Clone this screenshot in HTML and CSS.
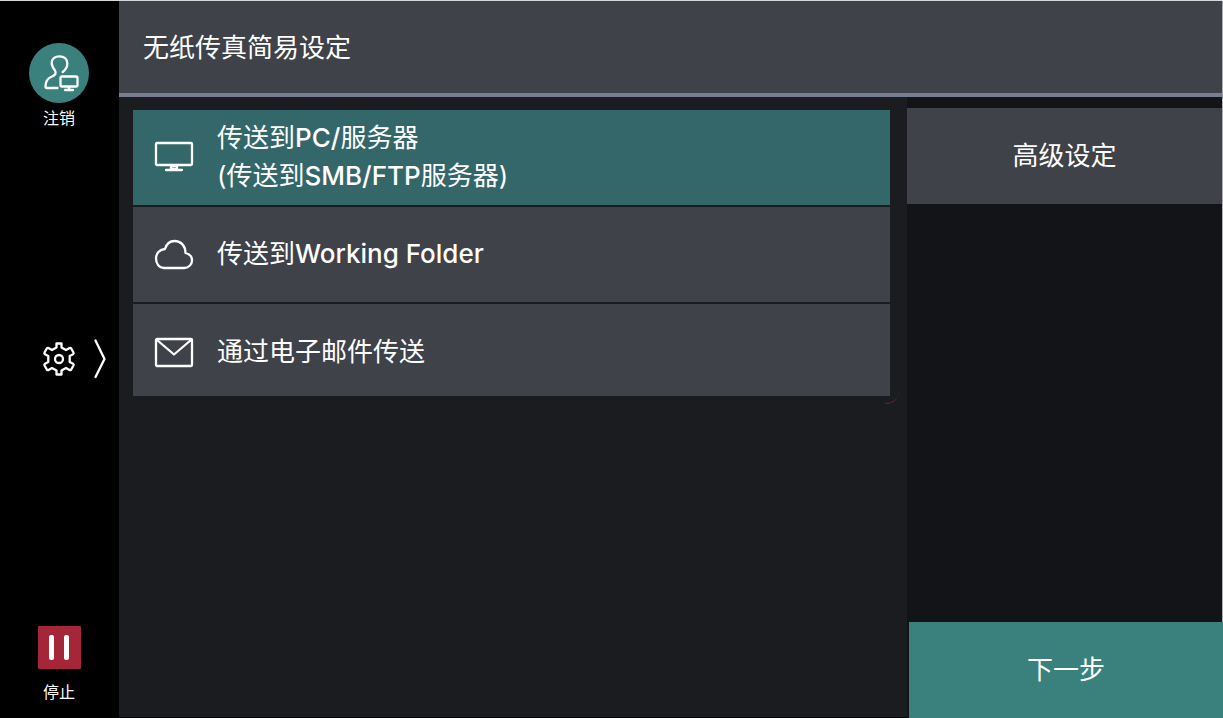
FILE: index.html
```html
<!DOCTYPE html>
<html lang="zh-CN">
  <head>
    <meta charset="UTF-8" />
    <meta name="viewport" content="width=device-width, initial-scale=1.0" />
    <title>无纸传真简易设定</title>
    <link rel="stylesheet" href="styles.css">
  </head>
  <body>
    <nav class="sidebar">
      <button class="side-btn" type="button">
        <svg class="avatar" viewBox="0 0 60 60" aria-hidden="true">
          <circle cx="30" cy="30" r="30" />
          <path d="M28.500 45H18C17 45 16.500 44.500 16.500 43.500C16.500 38 19 35 23 33.500C26.500 32 27.500 30 26 27.500C24 25 22.700 22.500 22.700 20C22.700 16 26 13.300 30.500 13.300C35 13.300 38.300 16 38.300 20.500C38.300 23.500 37 26.500 33.700 29" />
          <rect x="31.500" y="33.500" width="17" height="10" rx="1.500" />
          <path d="M40 44V46.500M36 47H44" />
        </svg>
        <span>注销</span>
      </button>
      <button class="settings-btn" type="button" aria-label="设定">
        <svg class="gear" viewBox="0 0 34 34" aria-hidden="true">
          <path d="M14.500 1.500H19.500V5.500L24 8L27.500 6Q28.500 5.500 29.200 6.500L31.500 10.500Q32 11.500 31 12.200L27.700 14V20L31 21.800Q32 22.500 31.500 23.500L29.200 27.500Q28.500 28.500 27.500 28L24 26L19.500 28.500V32.500H14.500V28.500L10 26L6.500 28Q5.500 28.500 4.800 27.500L2.500 23.500Q2 22.500 3 21.800L6.300 20V14L3 12.200Q2 11.500 2.500 10.500L4.800 6.500Q5.500 5.500 6.500 6L10 8L14.500 5.500Z" />
          <circle cx="17" cy="17" r="4" />
        </svg>
        <svg class="arrow" viewBox="0 0 12 40" aria-hidden="true">
          <path d="M1.500 1.500L10.500 20L1.500 38" />
        </svg>
      </button>
      <button class="side-btn" type="button">
        <svg class="stop" viewBox="0 0 44 44" aria-hidden="true">
          <rect class="stop-bg" x="1" width="43" height="43" rx="1" />
          <rect x="12" y="9" width="5" height="25" rx="2" />
          <rect x="27" y="9" width="5" height="25" rx="2" />
        </svg>
        <span>停止</span>
      </button>
    </nav>

    <div class="screen">
      <header class="header">
        <h1>无纸传真简易设定</h1>
      </header>
      <div class="content">
        <main class="main">
          <div class="list">
            <button class="item active" type="button">
              <svg class="icon" viewBox="0 0 40 32" aria-hidden="true">
                <rect x="2" y="2" width="36" height="22" rx="1" />
                <path d="M17 25H23V28H17ZM12 29H28" />
              </svg>
              <span>传送到<span class="latin">PC/</span>服务器<br>(传送到<span class="latin">SMB/FTP</span>服务器)</span>
            </button>
            <button class="item" type="button">
              <svg class="icon" viewBox="0 0 40 32" aria-hidden="true">
                <path d="M10 30C5 30 2 25.500 2 20.500C2 15.500 5.500 11.500 11 11C12.500 6 16 3 20.500 3C27 3 31.500 8 31.500 15C35.500 16 38 19 38 22.500C38 26.500 34.500 30 30 30Z" />
              </svg>
              <span>传送到<span class="latin">Working Folder</span></span>
            </button>
            <button class="item" type="button">
              <svg class="icon" viewBox="0 0 40 32" aria-hidden="true">
                <rect x="2" y="3" width="36" height="27" rx="1" />
                <path d="M3 4L20 18.500L37 4" />
              </svg>
              <span>通过电子邮件传送</span>
            </button>
          </div>
        </main>
        <aside class="panel">
          <button class="advanced" type="button">高级设定</button>
          <button class="next" type="button">下一步</button>
        </aside>
      </div>
    </div>
  </body>
</html>
```

FILE: styles.css
```css
* {
  box-sizing: border-box;
  margin: 0;
  padding: 0;
}
body {
  font-family: "Inter", "Noto Sans CJK SC", sans-serif;
  font-size: 26px;
  background: #000;
  color: #fff;
  display: flex;
  min-height: 100vh;
  border-top: 1px solid #d5d8d8;
}
button {
  font: inherit;
  color: inherit;
  background: none;
  border: none;
  cursor: pointer;
}
svg {
  fill: none;
  stroke: #fff;
  stroke-width: 2.3;
  stroke-linejoin: round;
  stroke-linecap: round;
}

/* left bar */
.sidebar {
  width: 119px;
  padding: 42px 1px 14px 0;
  display: flex;
  flex-direction: column;
  justify-content: space-between;
}
.side-btn {
  display: flex;
  flex-direction: column;
  align-items: center;
  gap: 3px;
  font-size: 16px;
  line-height: 24px;
}
.avatar {
  width: 60px;
  height: 60px;
}
.avatar circle {
  fill: #3a817e;
  stroke: none;
}
.settings-btn {
  display: flex;
  align-items: center;
  justify-content: flex-end;
  gap: 18px;
  margin-bottom: 38px;
  padding-right: 12px;
}
.gear {
  width: 34px;
  height: 34px;
}
.arrow {
  width: 12px;
  height: 40px;
}
.stop {
  width: 44px;
  height: 44px;
  margin-bottom: 7px;
  fill: #fff;
  stroke: none;
}
.stop-bg {
  fill: #a62639;
}

/* right part */
.screen {
  flex: 1;
  display: flex;
  flex-direction: column;
}
.header {
  height: 96px;
  padding: 0 24px 3px;
  display: flex;
  align-items: center;
  background: #404249;
  border-bottom: 4px solid #777e91;
}
.header h1 {
  font-size: 26px;
  font-weight: 400;
}
.content {
  flex: 1;
  display: flex;
}
.main {
  flex: 1;
  padding: 13px 17px 0 14px;
  background: #1b1c20;
  border-bottom: 1px solid #000;
}
.list {
  position: relative;
  display: flex;
  flex-direction: column;
  gap: 2px;
}
.list::after {
  content: "";
  position: absolute;
  right: -9px;
  bottom: -8px;
  width: 14px;
  height: 12px;
  border-bottom: 1px solid #5a2c3b;
  border-bottom-right-radius: 14px;
}
.item {
  display: flex;
  align-items: center;
  gap: 23px;
  min-height: 95px;
  padding: 0 21px 2px;
  background: #404249;
  text-align: left;
  line-height: 38px;
}
.item:last-child {
  min-height: 92px;
  padding: 4px 21px 0;
}
.item.active {
  background: #34676a;
}
.latin {
  font-weight: 500;
}
.icon {
  width: 40px;
  height: 32px;
}
.panel {
  width: 316px;
  padding-top: 11px;
  display: flex;
  flex-direction: column;
  justify-content: space-between;
  background: #131418;
}
.advanced,
.next {
  height: 96px;
  padding-bottom: 5px;
}
.advanced {
  background: #404249;
}
.next {
  margin-left: 2px;
  background: #3a817e;
}
.header,
.panel {
  border-right: 1px solid #a9abae;
}
.next {
  margin-right: -1px;
}
```
